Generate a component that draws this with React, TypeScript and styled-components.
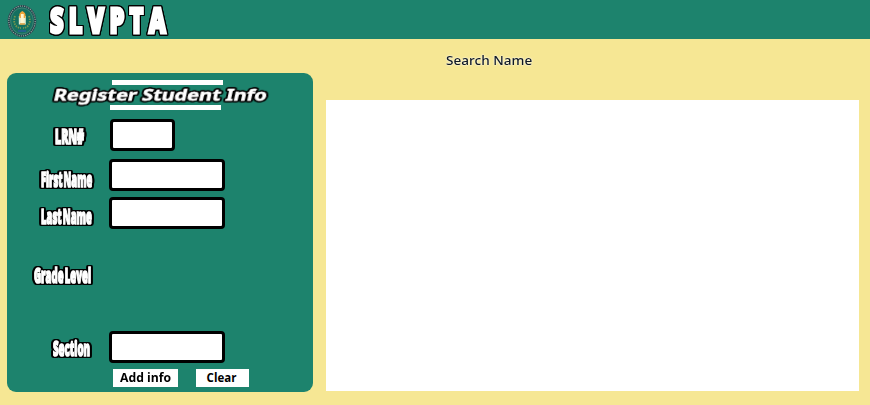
import React, { useLayoutEffect, useRef, useState } from 'react';
import styled, { createGlobalStyle, css } from 'styled-components';

const green = '#1d836d';
const sand = '#f6e794';

const GlobalStyle = createGlobalStyle`
  *, *::before, *::after { box-sizing: border-box; }
  body { margin: 0; background: ${sand}; }
`;

const Page = styled.div`
  width: 870px;
  height: 405px;
  display: flex;
  flex-direction: column;
  background: ${sand};
  font-family: 'Noto Sans', sans-serif;
`;

const Header = styled.header`
  height: 39px;
  flex: none;
  display: flex;
  align-items: center;
  padding-left: 7px;
  background: ${green};
`;

const Seal = styled.svg`
  width: 30px;
  height: 34px;
  flex: none;
  margin: 2px 13px 0 0;
`;

const Main = styled.main`
  display: grid;
  grid-template-columns: 306px 533px;
  column-gap: 13px;
  padding-left: 7px;
`;

const Panel = styled.section`
  height: 319px;
  margin-top: 34px;
  padding-top: 7px;
  border-radius: 9px;
  background: ${green};
`;

const Rule = styled.div<{ $left: number }>`
  width: 111px;
  height: 5px;
  margin-left: ${(p) => p.$left}px;
  background: #fff;
`;

const HeadingRow = styled.div`
  height: 20px;
  padding: 0 0 0 47px;
`;

const Row = styled.div<{ $indent: number; $gap: number }>`
  height: 32px;
  margin-top: ${(p) => p.$gap}px;
  padding-left: ${(p) => p.$indent}px;
  display: flex;
`;

const LabelCell = styled.div<{ $width: number; $drop: number }>`
  width: ${(p) => p.$width}px;
  height: 32px;
  flex: none;
  display: flex;
  align-items: center;
  padding-top: ${(p) => p.$drop}px;
`;

const Field = styled.input<{ $width: number }>`
  width: ${(p) => p.$width}px;
  height: 32px;
  padding: 0 4px;
  border: 3px solid #000;
  border-radius: 4px;
  background: #fff;
  outline: none;
`;

const Actions = styled.div`
  display: flex;
  gap: 18px;
  margin: 6px 0 0 106px;
`;

const Button = styled.button<{ $width: number }>`
  width: ${(p) => p.$width}px;
  height: 18px;
  padding: 0 2px 0 0;
  border: 0;
  display: flex;
  align-items: center;
  justify-content: center;
  background: #fff;
  color: #000;
`;

const Results = styled.section`
  display: flex;
  flex-direction: column;
`;

const SearchLabel = styled.div`
  height: 61px;
  padding: 9px 0 0 120px;
`;

const ResultArea = styled.div`
  height: 291px;
  background: #fff;
`;

type Look = 'brand' | 'heading' | 'label' | 'button' | 'search';

const looks = {
  brand: css`
    font: 800 36px/38px 'Open Sans', sans-serif;
    letter-spacing: 8px;
    color: #fff;
    -webkit-text-stroke: 3px #fff;
    stroke-linejoin: round;
    filter: drop-shadow(1px 0 0 #000) drop-shadow(-1px 0 0 #000)
      drop-shadow(0 1px 0 #000) drop-shadow(0 -1px 0 #000) drop-shadow(0 0 0.7px #000);
  `,
  heading: css`
    font: 700 16px/21px 'Noto Sans', sans-serif;
    color: #fff;
    -webkit-text-stroke: 0.5px #fff;
    filter: drop-shadow(1px 0 0 #000) drop-shadow(-1px 0 0 #000)
      drop-shadow(0 1px 0 #000) drop-shadow(0 -1px 0 #000) drop-shadow(0 0 0.6px #000);
  `,
  label: css`
    font: 800 21.5px/24px 'Open Sans', sans-serif;
    word-spacing: -3px;
    color: #fff;
    -webkit-text-stroke: 1.7px #fff;
    filter: drop-shadow(3px 0 0 #000) drop-shadow(-3px 0 0 #000)
      drop-shadow(0 1px 0 #000) drop-shadow(0 -1px 0 #000) drop-shadow(0 0 0.6px #000);
  `,
  button: css`
    font: 700 11.5px/16px 'Open Sans', sans-serif;
    color: #000;
  `,
  search: css`
    font: 500 12px/25px 'Noto Sans', sans-serif;
    color: #101820;
    text-shadow: 0 0 2px #fff, 0 0 1px #fff;
  `,
};

const Slot = styled.span<{ $width: number }>`
  display: block;
  width: ${(p) => p.$width}px;
  white-space: nowrap;
`;

const Lettering = styled.span<{ $look: Look }>`
  display: inline-block;
  vertical-align: top;
  transform-origin: 0 50%;
  ${(p) => looks[p.$look]}
`;

/* Stretches or condenses its lettering to the given width. */
function FitText({ width, look, children }: { width: number; look: Look; children: string }) {
  const ref = useRef<HTMLSpanElement>(null);
  const [scale, setScale] = useState(1);
  useLayoutEffect(() => {
    const el = ref.current;
    if (!el) return;
    const natural = el.offsetWidth - (look === 'brand' ? 8 : 0);
    setScale(width / natural);
  }, [width, look, children]);
  const slant = look === 'heading' ? ' skewX(-10deg)' : '';
  return (
    <Slot $width={width}>
      <Lettering ref={ref} $look={look} style={{ transform: `scaleX(${scale})${slant}` }}>
        {children}
      </Lettering>
    </Slot>
  );
}

const fields = [
  { label: 'LRN#', left: 48, width: 29, drop: 2, gap: 9, inputLeft: 103, input: 65 },
  { label: 'First Name', left: 34, width: 51, drop: 7, gap: 8, inputLeft: 102, input: 116 },
  { label: 'Last Name', left: 34, width: 51, drop: 6, gap: 6, inputLeft: 102, input: 116 },
  { label: 'Grade Level', left: 27, width: 57, drop: 0, gap: 30, inputLeft: 102, input: 0 },
  { label: 'Section', left: 46, width: 37, drop: 1, gap: 40, inputLeft: 102, input: 116 },
];

export default function App() {
  return (
    <Page>
      <GlobalStyle />
      <Header>
        <Seal viewBox="0 0 30 34">
          <ellipse cx="15" cy="17" rx="13.2" ry="15" fill="#1a6c60" stroke="#24404a" strokeWidth="2.2" />
          <ellipse cx="15" cy="17" rx="13.2" ry="15" fill="none" stroke="#8fa69d" strokeWidth="1.2" strokeDasharray="1.2 1" />
          <ellipse cx="15" cy="17" rx="11.3" ry="13" fill="#14705f" stroke="#598d80" strokeWidth=".6" />
          <path d="M8 12C5.5 19 9 24 14 24M22 12c2.5 7-1 12-6 12" fill="none" stroke="#77964f" strokeWidth="1.8" strokeDasharray="1.5 1" />
          <path d="M11.8 12h7v8.5h-7z" fill="#e9edcf" />
          <path d="M15.3 7c3.5 2 3.7 4 2.8 7h-5.4C11.8 11 12 9 15.3 7z" fill="#f0a638" />
          <path d="M15.3 10v9" stroke="#fff6cf" strokeWidth="2.8" />
          <path d="M13 20h5" stroke="#d99b3c" strokeWidth="1.5" />
          <path d="M11 27h8" stroke="#265f91" strokeWidth="1.8" />
        </Seal>
        <FitText width={116} look="brand">SLVPTA</FitText>
      </Header>
      <Main>
        <Panel>
          <Rule $left={105} />
          <HeadingRow>
            <FitText width={213} look="heading">Register Student Info</FitText>
          </HeadingRow>
          <Rule $left={103} />
          {fields.map((f) => (
            <Row key={f.label} $indent={f.left} $gap={f.gap}>
              <LabelCell $width={f.inputLeft - f.left} $drop={f.drop}>
                <FitText width={f.width} look="label">{f.label}</FitText>
              </LabelCell>
              {f.input > 0 && <Field $width={f.input} aria-label={f.label} />}
            </Row>
          ))}
          <Actions>
            <Button $width={65}><FitText width={51} look="button">Add info</FitText></Button>
            <Button $width={53}><FitText width={30} look="button">Clear</FitText></Button>
          </Actions>
        </Panel>
        <Results>
          <SearchLabel>
            <FitText width={86} look="search">Search Name</FitText>
          </SearchLabel>
          <ResultArea />
        </Results>
      </Main>
    </Page>
  );
}
